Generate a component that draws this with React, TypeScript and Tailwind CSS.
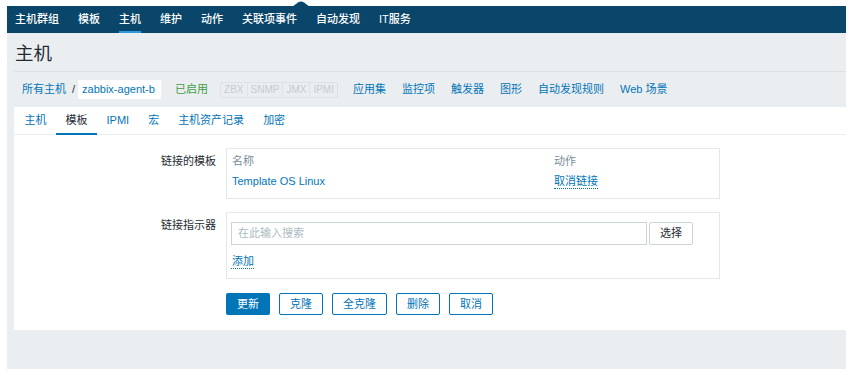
import React from "react";

const font = "font-['Liberation_Sans','Noto_Sans_CJK_SC',sans-serif]";

const topNav = ["主机群组", "模板", "主机", "维护", "动作", "关联项事件", "自动发现", "IT服务"];
const hostLinks = ["应用集", "监控项", "触发器", "图形", "自动发现规则", "Web 场景"];
const tabs = ["主机", "模板", "IPMI", "宏", "主机资产记录", "加密"];
const availability = ["ZBX", "SNMP", "JMX", "IPMI"];

function OutlineButton({ label, width }: { label: string; width: string }) {
  return (
    <button
      className={`${width} h-[22px] rounded-[2px] border border-[#0275b8] bg-white text-[11px] text-[#0275b8] flex items-center justify-center`}
    >
      {label}
    </button>
  );
}

export default function App() {
  return (
    <div className={`w-[852px] h-[382px] bg-white pt-[6px] pl-[7px] pr-[6px] overflow-hidden ${font}`}>
      {/* top menu */}
      <div className="relative h-[27px] bg-[#0a466a] flex items-center gap-[19px] pl-[8px]">
        <svg className="absolute left-[285px] top-[-5px]" width="18" height="6" viewBox="0 0 18 6">
          <path d="M0 6 L6 1.5 Q9 -0.5 12 1.5 L18 6 Z" fill="#0a466a" />
        </svg>
        {topNav.map((item) => (
          <div key={item} className="relative h-full flex items-center">
            <span className="text-[11px] text-white font-medium leading-none">{item}</span>
            {item === "主机" && (
              <span className="absolute left-0 right-0 bottom-0 h-[2px] bg-[#2b9be0]" />
            )}
          </div>
        ))}
      </div>

      <div className="h-[336px] bg-[#ebeef0] pt-[10px]">
        <div className="pl-[8px] text-[18.5px] leading-[22px] text-[#1f2c33]">主机</div>
        <div className="ml-[7px] mt-[6px] h-px bg-[#dde1e4]" />

        {/* host breadcrumb / sub links */}
        <div className="h-[19px] mt-[8px] mb-[8px] pl-[15px] flex items-center text-[11px]">
          <span className="text-[#0275b8]">所有主机</span>
          <span className="ml-[6px] text-[#1f2c33]">/</span>
          <span className="ml-[3px] h-[19px] w-[83px] bg-white flex items-center pl-[4px] text-[#0275b8]">
            zabbix-agent-b
          </span>
          <span className="ml-[14px] text-[#429e47]">已启用</span>
          <div className="ml-[12px] flex h-[16px] border border-[#dde2e5] rounded-[2px]">
            {availability.map((a, i) => (
              <span
                key={a}
                className={`px-[3px] flex items-center text-[10px] text-[#c3ccd1] ${i > 0 ? "border-l border-[#dde2e5]" : ""}`}
              >
                {a}
              </span>
            ))}
          </div>
          <div className="ml-[15px] flex gap-[16px]">
            {hostLinks.map((l) => (
              <span key={l} className="text-[#0275b8]">
                {l}
              </span>
            ))}
          </div>
        </div>

        {/* main panel */}
        <div className="ml-[7px] bg-white h-[223px]">
          <div className="h-[28px] flex pl-[1px] border-b border-[#ebeef0]">
            {tabs.map((t) => (
              <div key={t} className="relative px-[9.5px] flex items-center text-[11px]">
                <span className={t === "模板" ? "text-[#1f2c33]" : "text-[#0275b8]"}>{t}</span>
                {t === "模板" && (
                  <span className="absolute left-0 right-0 bottom-[-1px] h-[2px] bg-[#0275b8]" />
                )}
              </div>
            ))}
          </div>

          <div className="pt-[13px] grid grid-cols-[202px_494px] gap-x-[10px] gap-y-[13px] text-[11px] text-[#1f2c33]">
            <div className="text-right pt-[5px]">链接的模板</div>
            <div className="h-[51px] border border-[#e4e8eb] px-[5px] pt-[5px] flex">
              <div className="w-[322px]">
                <div className="text-[#768d99] leading-[14px]">名称</div>
                <div className="text-[#0275b8] mt-[6px] leading-[14px]">Template OS Linux</div>
              </div>
              <div>
                <div className="text-[#768d99] leading-[14px]">动作</div>
                <div className="text-[#0275b8] mt-[6px] leading-[14px] border-b border-dotted border-[#0275b8] inline-block">
                  取消链接
                </div>
              </div>
            </div>

            <div className="text-right pt-[5px]">链接指示器</div>
            <div className="h-[67px] border border-[#e4e8eb] px-[4px] pt-[9px]">
              <div className="flex gap-[2px]">
                <div className="w-[416px] h-[23px] border border-[#cdd4d9] flex items-center pl-[6px] text-[#acbbc2]">
                  在此输入搜索
                </div>
                <button className="w-[44px] h-[23px] border border-[#cdd4d9] rounded-[2px] bg-white text-[#1f2c33] text-[11px]">
                  选择
                </button>
              </div>
              <div className="mt-[9px] pl-[1px] inline-block text-[#0275b8] border-b border-dotted border-[#0275b8] leading-[14px]">
                添加
              </div>
            </div>

            <div />
            <div className="flex gap-[9px] mt-[1px]">
              <button className="w-[44px] h-[22px] rounded-[2px] bg-[#0275b8] text-white text-[11px]">更新</button>
              <OutlineButton label="克隆" width="w-[44px]" />
              <OutlineButton label="全克隆" width="w-[55px]" />
              <OutlineButton label="删除" width="w-[44px]" />
              <OutlineButton label="取消" width="w-[44px]" />
            </div>
          </div>
        </div>
      </div>
    </div>
  );
}
